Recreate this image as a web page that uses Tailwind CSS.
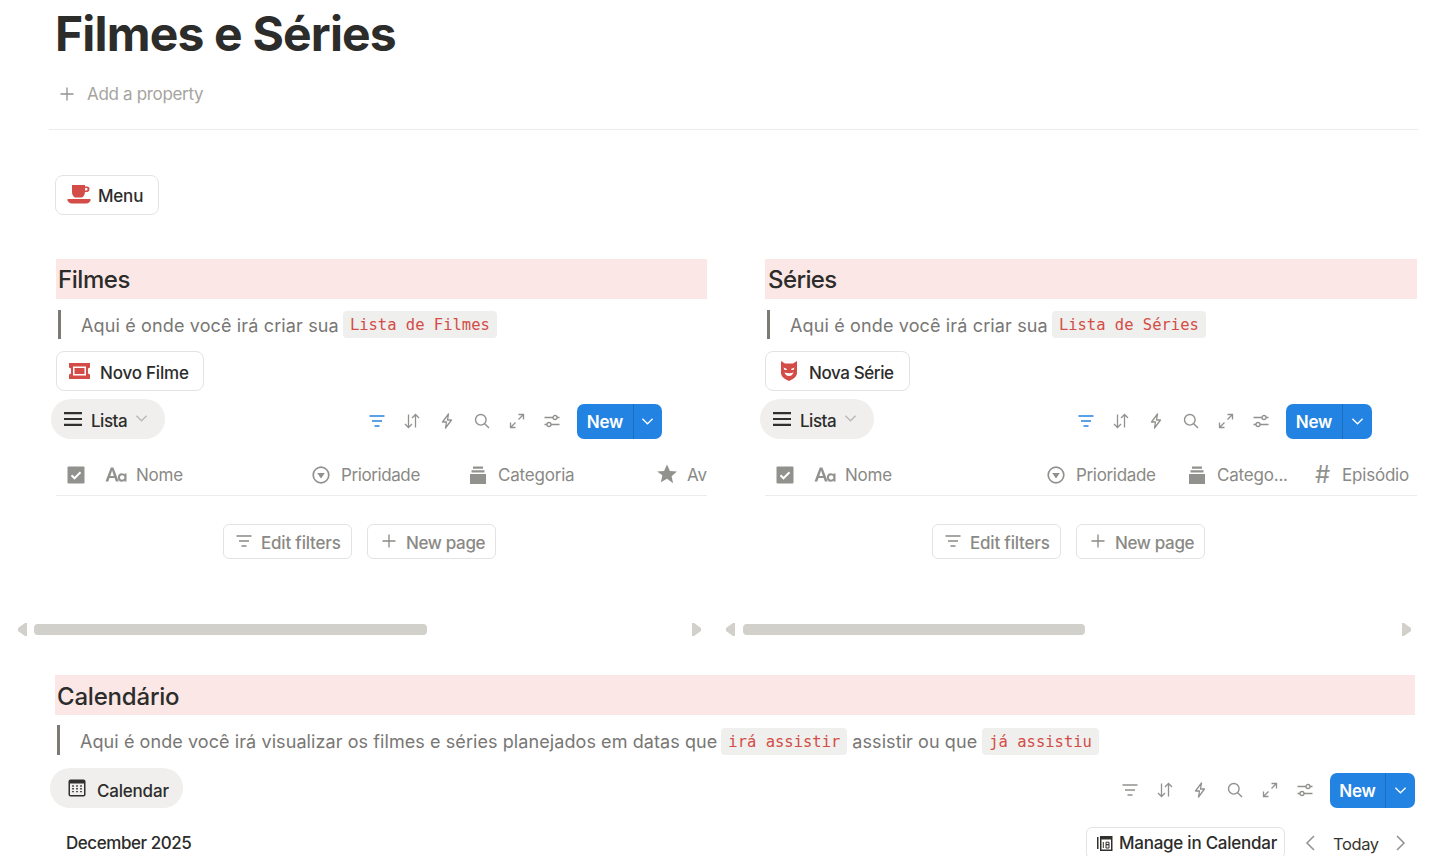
<!DOCTYPE html>
<html lang="en">
<head>
    <meta charset="UTF-8">
    <title>Filmes e Séries</title>
    <script src="https://cdn.jsdelivr.net/npm/@tailwindcss/browser@4"></script>
</head>
<body class="bg-white text-[#2c2c2b] font-['Inter',sans-serif] h-[856px] overflow-hidden">
    <!-- icons -->
    <svg class="hidden">
        <symbol id="i-filter" viewBox="0 0 16 16"><path d="M0.500 3h15M3 8h10M5.500 13h5" fill="none" stroke="currentColor" stroke-width="1.400"/></symbol>
        <symbol id="i-sort" viewBox="0 0 16 16"><path d="M4.500 1.500v13M1 11l3.500 3.500L8 11M11.500 14.500v-13M8 5l3.500-3.500L15 5" fill="none" stroke="currentColor" stroke-width="1.300"/></symbol>
        <symbol id="i-bolt" viewBox="0 0 16 16"><path d="M9.500 1L3.500 9h4l-1 6 6-8h-4z" fill="none" stroke="currentColor" stroke-width="1.300" stroke-linejoin="round"/></symbol>
        <symbol id="i-search" viewBox="0 0 16 16"><circle cx="6.800" cy="6.800" r="5.300" fill="none" stroke="currentColor" stroke-width="1.400"/><path d="M10.700 10.700l4.300 4.300" stroke="currentColor" stroke-width="1.400"/></symbol>
        <symbol id="i-expand" viewBox="0 0 16 16"><path d="M9.500 1.500h5v5M14.500 1.500L9.500 6.500M6.500 14.500h-5v-5M1.500 14.500l5-5" fill="none" stroke="currentColor" stroke-width="1.300"/></symbol>
        <symbol id="i-sliders" viewBox="0 0 16 16"><path d="M0.500 4.500h8.500M13 4.500h2.500M0.500 11.500h2.500M7 11.500h8.500" stroke="currentColor" stroke-width="1.300"/><circle cx="11" cy="4.500" r="2" fill="none" stroke="currentColor" stroke-width="1.300"/><circle cx="5" cy="11.500" r="2" fill="none" stroke="currentColor" stroke-width="1.300"/></symbol>
        <symbol id="i-chev" viewBox="0 0 14 14"><path d="M1.500 4L7 9.500 12.500 4" fill="none" stroke="currentColor" stroke-width="1.400"/></symbol>
        <symbol id="i-plus" viewBox="0 0 14 14"><path d="M7 0.500v13M0.500 7h13" stroke="currentColor" stroke-width="1.300"/></symbol>
        <symbol id="i-check" viewBox="0 0 18 18"><rect x="0.500" y="0.500" width="17" height="17" rx="1" fill="#91918e"/><path d="M4.500 9.300l3 3 6-6" fill="none" stroke="#fff" stroke-width="2"/></symbol>
        <symbol id="i-aa" viewBox="0 0 22 16"><path d="M0.500 14.500L5.800 0.500h2.600l5.300 14h-2.800l-1.200-3.400H4.500l-1.200 3.400zM5.300 8.900h3.600L7.100 3.600z" fill="currentColor"/><path d="M21.500 14.500h-2.100v-1c-.7.800-1.600 1.200-2.700 1.200-2.300 0-3.800-1.800-3.800-4.200s1.500-4.200 3.800-4.200c1.100 0 2 .4 2.700 1.200v-1h2.100zM17.100 12.700c1.300 0 2.300-.9 2.300-2.200s-1-2.200-2.300-2.200-2.200 1-2.200 2.200 .9 2.200 2.200 2.200z" fill="currentColor"/></symbol>
        <symbol id="i-select" viewBox="0 0 18 18"><circle cx="9" cy="9" r="7.800" fill="none" stroke="currentColor" stroke-width="1.700"/><path d="M5.200 7h7.600L9 12.500z" fill="currentColor"/></symbol>
        <symbol id="i-archive" viewBox="0 0 18 18"><path d="M4 0.500h10v2.200H4zM2.500 4.200h13v2.300h-13zM1 8h16v10H1z" fill="currentColor"/></symbol>
        <symbol id="i-star" viewBox="0 0 20 20"><path d="M10 0.500l2.900 6.400 7 .7-5.300 4.700 1.500 6.900L10 14.700l-6.100 3.500 1.500-6.900L0.100 7.600l7-.7z" fill="currentColor"/></symbol>
        <symbol id="i-burger" viewBox="0 0 18 14"><path d="M0 1.200h18M0 7h18M0 12.800h18" stroke="currentColor" stroke-width="2.200"/></symbol>
    </svg>

    <div class="pl-[55px] h-[68px] flex items-center">
        <h1 class="text-[48px] leading-[68px] font-bold tracking-[-0.82px] text-[#2c2c2b]">Filmes e Séries</h1>
    </div>
    <div class="pl-[60px] mt-[12px] h-[28px] flex items-center gap-[13px] text-[#a5a4a0] text-[17px] tracking-[-0.33px]">
        <svg class="w-[14px] h-[14px] -mt-[1px] text-[#91918e]"><use href="#i-plus"/></svg>
        <span class="pt-[2px]">Add a property</span>
    </div>
    <div class="ml-[49px] mr-[20px] mt-[21px] border-t border-[#ececea]"></div>

    <div class="ml-[55px] mt-[45px] w-[104px] h-[40px] border border-[#e3e3e1] rounded-[8px] flex items-center pl-[11px] gap-[7px] font-medium text-[17px] tracking-[-0.2px]">
        <svg class="w-[24px] h-[20px]" viewBox="0 0 24 20"><path d="M5 0h13v1.500h2c1.800 0 2.500 1 2.500 2.500s-.7 3-2.500 3h-2c-.3 3-1.500 4.500-3 5.500H8c-2-1-3-3-3-5.500zM18 3v2.500h1.500c.8 0 1-.5 1-1.200S20.300 3 19.500 3z" fill="#d44c47" fill-rule="evenodd"/><path d="M0.500 14h23v1.400c-1 2-2.500 3-4 3H4.500c-1.500 0-3-1-4-3z" fill="#d44c47"/></svg>
        <span class="pt-[4px]">Menu</span>
    </div>

    <div class="ml-[56px] mt-[44px] grid grid-cols-[651px_652px] gap-x-[58px]">
        <!-- Filmes -->
        <section class="min-w-0">
            <h2 class="h-[40px] bg-[#fbe7e6] pl-[2px] pt-[2px] flex items-center text-[24px] font-medium tracking-[-0.45px]">Filmes</h2>
            <div class="mt-[11px] h-[29px] ml-[2px] border-l-[3px] border-[#7d7a75] pl-[20px] flex items-center gap-[4px] text-[18px] tracking-[0.14px] text-[#787774] whitespace-nowrap">
                <span class="pt-[2px]">Aqui é onde você irá criar sua</span>
                <code class="font-['DejaVu_Sans_Mono',monospace] text-[15.5px] text-[#d44c47] bg-[#efefed] rounded-[4px] h-[27px] pt-[2px] px-[7px] flex items-center tracking-normal">Lista de Filmes</code>
            </div>
            <div class="mt-[12px] w-[148px] h-[40px] border border-[#e3e3e1] rounded-[8px] flex items-center pl-[11px] gap-[9px] font-medium text-[17px] tracking-[-0.2px]">
                <svg class="w-[23px] h-[16px]" viewBox="0 0 23 16"><path d="M1 0h21v4.500l-2 1v5l2 1V16H1v-4.500l2-1v-5l-2-1zM5 3.500v9h13v-9z" fill="#d44c47" fill-rule="evenodd"/><path d="M6.500 5h10v6h-10z" fill="#d44c47"/></svg>
                <span class="pt-[5px]">Novo Filme</span>
            </div>
            <div class="mt-[8px] -ml-[5px] flex items-center h-[40px]">
                <div class="w-[114px] h-[40px] rounded-full bg-[#f0efed] flex items-center pl-[13px] font-medium text-[17px] tracking-[-0.5px]">
                    <svg class="w-[18px] h-[14px] text-[#32302c]"><use href="#i-burger"/></svg>
                    <span class="ml-[9px] pt-[5px]">Lista</span>
                    <svg class="ml-[8px] w-[13px] h-[13px] -mt-[2px] text-[#b9b8b5]"><use href="#i-chev"/></svg>
                </div>
                <div class="ml-[204px] mt-[4px] flex items-center gap-[19px] text-[#91918e]">
                    <svg class="w-[16px] h-[16px] text-[#2383e2]"><use href="#i-filter"/></svg>
                    <svg class="w-[16px] h-[16px]"><use href="#i-sort"/></svg>
                    <svg class="w-[16px] h-[16px]"><use href="#i-bolt"/></svg>
                    <svg class="w-[16px] h-[16px]"><use href="#i-search"/></svg>
                    <svg class="w-[16px] h-[16px]"><use href="#i-expand"/></svg>
                    <svg class="w-[16px] h-[16px]"><use href="#i-sliders"/></svg>
                </div>
                <div class="ml-[17px] mt-[4px] w-[85px] h-[35px] rounded-[7px] bg-[#2383e2] text-white flex items-center font-semibold text-[17px] tracking-[-0.2px]">
                    <span class="w-[57px] h-full pt-[3px] flex items-center justify-center border-r border-[#1b6fc2]">New</span>
                    <svg class="ml-[7px] w-[13px] h-[13px]"><use href="#i-chev"/></svg>
                </div>
            </div>
            <div class="mt-[16px] h-[41px] border-b border-[#ececea] flex items-center text-[17px] tracking-[-0.2px] text-[#8a8985] whitespace-nowrap overflow-hidden">
                <div class="w-[49px] pl-[11px] shrink-0"><svg class="w-[18px] h-[18px] block"><use href="#i-check"/></svg></div>
                <div class="w-[207px] shrink-0 flex items-center gap-[9px]"><svg class="w-[22px] h-[16px] text-[#91918e]"><use href="#i-aa"/></svg><span class="pt-[2px]">Nome</span></div>
                <div class="w-[157px] shrink-0 flex items-center gap-[11px] tracking-[-0.4px]"><svg class="w-[18px] h-[18px] -mt-[1px] text-[#91918e]"><use href="#i-select"/></svg><span class="pt-[2px]">Prioridade</span></div>
                <div class="w-[188px] shrink-0 flex items-center gap-[11px]"><svg class="w-[18px] h-[18px] text-[#91918e]"><use href="#i-archive"/></svg><span class="pt-[2px]">Categoria</span></div>
                <div class="shrink-0 flex items-center gap-[10px]"><svg class="w-[20px] h-[20px] -mt-[2px] text-[#91918e]"><use href="#i-star"/></svg><span class="pt-[2px]">Av</span></div>
            </div>
            <div class="mt-[28px] ml-[167px] flex gap-[15px] text-[17px] font-medium tracking-[-0.2px] text-[#8a8985]">
                <div class="w-[129px] h-[35px] border border-[#e3e3e1] rounded-[6px] flex items-center pl-[12px] gap-[9px]"><svg class="w-[16px] h-[16px] -mt-[1px]"><use href="#i-filter"/></svg><span class="pt-[5px]">Edit filters</span></div>
                <div class="w-[129px] h-[35px] border border-[#e3e3e1] rounded-[6px] flex items-center pl-[14px] gap-[10px] tracking-[-0.35px]"><svg class="w-[14px] h-[14px] -mt-[2px]"><use href="#i-plus"/></svg><span class="pt-[5px]">New page</span></div>
            </div>
        </section>

        <!-- Series -->
        <section class="min-w-0">
            <h2 class="h-[40px] bg-[#fbe7e6] pl-[3px] pt-[2px] flex items-center text-[24px] font-medium tracking-[-0.6px]">Séries</h2>
            <div class="mt-[11px] h-[29px] ml-[2px] border-l-[3px] border-[#7d7a75] pl-[20px] flex items-center gap-[4px] text-[18px] tracking-[0.14px] text-[#787774] whitespace-nowrap">
                <span class="pt-[2px]">Aqui é onde você irá criar sua</span>
                <code class="font-['DejaVu_Sans_Mono',monospace] text-[15.5px] text-[#d44c47] bg-[#efefed] rounded-[4px] h-[27px] pt-[2px] px-[7px] flex items-center tracking-normal">Lista de Séries</code>
            </div>
            <div class="mt-[12px] w-[145px] h-[40px] border border-[#e3e3e1] rounded-[8px] flex items-center pl-[14px] gap-[11px] font-medium text-[17px] tracking-[-0.4px]">
                <svg class="w-[18px] h-[20px]" viewBox="0 0 18 20"><path d="M1 0l4 2.500h8L17 0v12c0 3.500-4 6.500-8 8-4-1.500-8-4.500-8-8z" fill="#d44c47"/><path d="M3.500 6.500l3.500 1.500-.5 1H4.500zM14.500 6.500L11 8l.5 1h2zM4.500 11.500c3 1 6 1 9 0-.8 2.500-2.500 3.500-4.500 3.500s-3.700-1-4.500-3.500z" fill="#fff"/></svg>
                <span class="pt-[5px]">Nova Série</span>
            </div>
            <div class="mt-[8px] -ml-[5px] flex items-center h-[40px]">
                <div class="w-[114px] h-[40px] rounded-full bg-[#f0efed] flex items-center pl-[13px] font-medium text-[17px] tracking-[-0.5px]">
                    <svg class="w-[18px] h-[14px] text-[#32302c]"><use href="#i-burger"/></svg>
                    <span class="ml-[9px] pt-[5px]">Lista</span>
                    <svg class="ml-[8px] w-[13px] h-[13px] -mt-[2px] text-[#b9b8b5]"><use href="#i-chev"/></svg>
                </div>
                <div class="ml-[204px] mt-[4px] flex items-center gap-[19px] text-[#91918e]">
                    <svg class="w-[16px] h-[16px] text-[#2383e2]"><use href="#i-filter"/></svg>
                    <svg class="w-[16px] h-[16px]"><use href="#i-sort"/></svg>
                    <svg class="w-[16px] h-[16px]"><use href="#i-bolt"/></svg>
                    <svg class="w-[16px] h-[16px]"><use href="#i-search"/></svg>
                    <svg class="w-[16px] h-[16px]"><use href="#i-expand"/></svg>
                    <svg class="w-[16px] h-[16px]"><use href="#i-sliders"/></svg>
                </div>
                <div class="ml-[17px] mt-[4px] w-[86px] h-[35px] rounded-[7px] bg-[#2383e2] text-white flex items-center font-semibold text-[17px] tracking-[-0.2px]">
                    <span class="w-[57px] h-full pt-[3px] flex items-center justify-center border-r border-[#1b6fc2]">New</span>
                    <svg class="ml-[8px] w-[13px] h-[13px]"><use href="#i-chev"/></svg>
                </div>
            </div>
            <div class="mt-[16px] h-[41px] border-b border-[#ececea] flex items-center text-[17px] tracking-[-0.2px] text-[#8a8985] whitespace-nowrap overflow-hidden">
                <div class="w-[49px] pl-[11px] shrink-0"><svg class="w-[18px] h-[18px] block"><use href="#i-check"/></svg></div>
                <div class="w-[233px] shrink-0 flex items-center gap-[9px]"><svg class="w-[22px] h-[16px] text-[#91918e]"><use href="#i-aa"/></svg><span class="pt-[2px]">Nome</span></div>
                <div class="w-[141px] shrink-0 flex items-center gap-[11px] tracking-[-0.33px]"><svg class="w-[18px] h-[18px] -mt-[1px] text-[#91918e]"><use href="#i-select"/></svg><span class="pt-[2px]">Prioridade</span></div>
                <div class="w-[126px] shrink-0 flex items-center gap-[11px]"><svg class="w-[18px] h-[18px] text-[#91918e]"><use href="#i-archive"/></svg><span class="pt-[2px]">Catego...</span></div>
                <div class="shrink-0 flex items-center gap-[11px]"><span class="w-[17px] text-center text-[24px] leading-none text-[#91918e]">#</span><span class="pt-[2px]">Episódio</span></div>
            </div>
            <div class="mt-[28px] ml-[167px] flex gap-[15px] text-[17px] font-medium tracking-[-0.2px] text-[#8a8985]">
                <div class="w-[129px] h-[35px] border border-[#e3e3e1] rounded-[6px] flex items-center pl-[12px] gap-[9px]"><svg class="w-[16px] h-[16px] -mt-[1px]"><use href="#i-filter"/></svg><span class="pt-[5px]">Edit filters</span></div>
                <div class="w-[129px] h-[35px] border border-[#e3e3e1] rounded-[6px] flex items-center pl-[14px] gap-[10px] tracking-[-0.35px]"><svg class="w-[14px] h-[14px] -mt-[2px]"><use href="#i-plus"/></svg><span class="pt-[5px]">New page</span></div>
            </div>
        </section>
    </div>

    <!-- scrollbars -->
    <div class="ml-[17px] mt-[65px] h-[11px] flex items-center text-[#d1d0ca]">
        <svg class="w-[10px] h-[13px]" viewBox="0 0 10 13"><path d="M10 0v13H8L1 8V5l7-5z" fill="currentColor"/></svg>
        <div class="ml-[7px] w-[393px] h-[11px] rounded-[4px] bg-[#d1d0ca]"></div>
        <svg class="ml-[265px] w-[10px] h-[13px]" viewBox="0 0 10 13"><path d="M0 0v13h2l7-5V5L2 0z" fill="currentColor"/></svg>
        <svg class="ml-[23px] w-[10px] h-[13px]" viewBox="0 0 10 13"><path d="M10 0v13H8L1 8V5l7-5z" fill="currentColor"/></svg>
        <div class="ml-[8px] w-[342px] h-[11px] rounded-[4px] bg-[#d1d0ca]"></div>
        <svg class="ml-[317px] w-[10px] h-[13px]" viewBox="0 0 10 13"><path d="M0 0v13h2l7-5V5L2 0z" fill="currentColor"/></svg>
    </div>

    <!-- Calendario -->
    <section class="ml-[55px] mr-[23px] mt-[40px]">
        <h2 class="h-[40px] bg-[#fbe7e6] pl-[2px] pt-[4px] flex items-center text-[24px] font-medium tracking-[-0.2px]">Calendário</h2>
        <div class="mt-[10px] h-[30px] ml-[2px] border-l-[3px] border-[#7d7a75] pl-[20px] flex items-center gap-[4px] text-[18px] tracking-[0.08px] text-[#787774] whitespace-nowrap">
            <span class="pt-[2px]">Aqui é onde você irá visualizar os filmes e séries planejados em datas que</span>
            <code class="mt-[3px] font-['DejaVu_Sans_Mono',monospace] text-[15.5px] text-[#d44c47] bg-[#efefed] rounded-[4px] h-[27px] pt-[2px] px-[7px] flex items-center tracking-normal">irá assistir</code>
            <span class="pt-[2px] ml-[1px]">assistir ou que</span>
            <code class="mt-[3px] ml-[1px] font-['DejaVu_Sans_Mono',monospace] text-[15.5px] text-[#d44c47] bg-[#efefed] rounded-[4px] h-[27px] pt-[2px] px-[7px] flex items-center tracking-normal">já assistiu</code>
        </div>
        <div class="mt-[13px] -ml-[5px] h-[40px] flex items-center">
            <div class="w-[133px] h-[40px] rounded-full bg-[#f0efed] flex items-center pl-[18px] gap-[11px] font-medium text-[17px] tracking-[-0.2px]">
                <svg class="w-[18px] h-[18px]" viewBox="0 0 18 18"><rect x="0.500" y="0.500" width="17" height="17" rx="2" fill="#32302c"/><rect x="2" y="4.500" width="14" height="11.500" fill="#f0efed"/><path d="M4 7h2M8 7h2M12 7h2M4 9.800h2M8 9.800h2M12 9.800h2M4 12.600h2M8 12.600h2M12 12.600h2" stroke="#55534e" stroke-width="1.400"/></svg>
                <span class="pt-[7px]">Calendar</span>
            </div>
            <div class="ml-auto mt-[4px] flex items-center gap-[19px] text-[#91918e]">
                <svg class="w-[16px] h-[16px]"><use href="#i-filter"/></svg>
                <svg class="w-[16px] h-[16px]"><use href="#i-sort"/></svg>
                <svg class="w-[16px] h-[16px]"><use href="#i-bolt"/></svg>
                <svg class="w-[16px] h-[16px]"><use href="#i-search"/></svg>
                <svg class="w-[16px] h-[16px]"><use href="#i-expand"/></svg>
                <svg class="w-[16px] h-[16px]"><use href="#i-sliders"/></svg>
            </div>
            <div class="ml-[17px] mt-[4px] w-[85px] h-[35px] rounded-[7px] bg-[#2383e2] text-white flex items-center font-semibold text-[17px] tracking-[-0.2px]">
                <span class="w-[56px] h-full pt-[3px] flex items-center justify-center border-r border-[#1b6fc2]">New</span>
                <svg class="ml-[8px] w-[13px] h-[13px]"><use href="#i-chev"/></svg>
            </div>
        </div>
        <div class="mt-[19px] pl-[11px] flex items-start">
            <span class="mt-[4px] font-medium text-[17px] tracking-[-0.45px]">December 2025</span>
            <div class="ml-auto flex items-center">
                <div class="w-[199px] h-[32px] border border-[#e3e3e1] rounded-[6px] flex items-center pl-[9px] gap-[5px] font-medium text-[17px] tracking-[-0.25px] whitespace-nowrap shrink-0">
                    <svg class="w-[18px] h-[18px] shrink-0" viewBox="0 0 18 18"><path d="M1 15V3h1.500v12zM4 2h12.500v15H4z" fill="#32302c"/><rect x="5.500" y="5.500" width="9.500" height="10" fill="#fff"/><path d="M7.300 8v6M10 8.200h3v2.500h-3zM10 10.700h3V14h-3z" fill="none" stroke="#32302c"/></svg>
                    <span class="pt-[2px]">Manage in Calendar</span>
                </div>
                <svg class="ml-[20px] w-[10px] h-[16px] text-[#91918e]" viewBox="0 0 10 16"><path d="M9 1L2 8l7 7" fill="none" stroke="currentColor" stroke-width="1.500"/></svg>
                <span class="ml-[18px] pt-[2px] w-[45px] text-[16.5px] tracking-[-0.4px] text-[#37352f]">Today</span>
                <svg class="ml-[18px] w-[10px] h-[16px] text-[#91918e]" viewBox="0 0 10 16"><path d="M1 1l7 7-7 7" fill="none" stroke="currentColor" stroke-width="1.500"/></svg>
                <div class="w-[9px]"></div>
            </div>
        </div>
    </section>
</body>
</html>
